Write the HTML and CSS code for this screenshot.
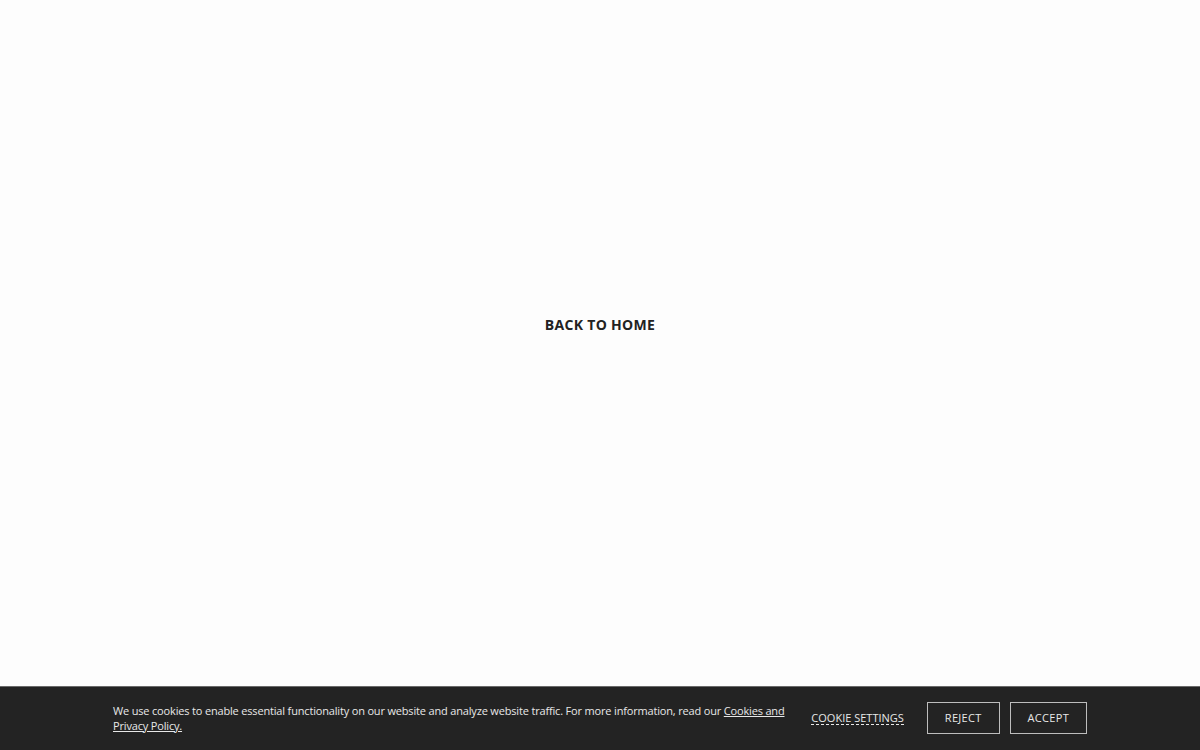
FILE: index.html
```html
<!DOCTYPE html>
<html lang="en">
<head>
<meta charset="utf-8">
<title>Back to home</title>
<link rel="stylesheet" href="styles.css">
</head>
<body>
<main class="main">
  <a class="home-link" href="#">BACK TO HOME</a>
</main>
<div class="cookie-bar">
  <div class="cookie-inner">
    <p class="cookie-text">We use cookies to enable essential functionality on our website and analyze website traffic. For more information, read our <a href="#" class="cookie-policy">Cookies and Privacy Policy.</a></p>
    <div class="cookie-actions">
      <a href="#" class="cookie-settings">COOKIE SETTINGS</a>
      <button class="cookie-btn btn-reject">REJECT</button>
      <button class="cookie-btn btn-accept">ACCEPT</button>
    </div>
  </div>
</div>
</body>
</html>
```
FILE: styles.css
```css
* { box-sizing: border-box; }
html, body { margin: 0; padding: 0; }
body {
  width: 1200px;
  height: 750px;
  overflow: hidden;
  background: #fdfdfd;
  font-family: "Open Sans", "Liberation Sans", sans-serif;
  color: #222;
  position: relative;
}
.main {
  height: 648px;
  display: flex;
  align-items: center;
  justify-content: center;
}
.home-link {
  font-weight: 700;
  font-size: 14px;
  color: #222;
  text-decoration: none;
  letter-spacing: 0.3px;
}
.cookie-bar {
  position: absolute;
  left: 0;
  right: 0;
  bottom: 0;
  height: 64px;
  background: #232323;
  border-top: 1px solid #6a6a6a;
  display: flex;
  align-items: center;
}
.cookie-inner {
  width: 974px;
  margin: 0 auto;
  display: flex;
  align-items: center;
}
.cookie-text {
  margin: -2px 0 0 0;
  flex: 0 0 680px;
  font-size: 11px;
  line-height: 15px;
  letter-spacing: -0.17px;
  color: #e8e8e8;
}
.cookie-policy { color: #e8e8e8; text-decoration: underline; }
.cookie-actions {
  margin-left: auto;
  display: flex;
  align-items: center;
  margin-top: -2px;
}
.cookie-settings {
  font-size: 11px;
  color: #e8e8e8;
  text-decoration: none;
  border-bottom: 1px dashed #e8e8e8;
  margin-right: 23px;
  line-height: 13px;
}
.cookie-btn {
  font-family: inherit;
  font-size: 11px;
  letter-spacing: 0.3px;
  color: #e8e8e8;
  background: transparent;
  border: 1px solid #bdbdbd;
  height: 32px;
  padding: 0 17px;
  cursor: pointer;
}
.btn-reject { margin-right: 10px; }
```
